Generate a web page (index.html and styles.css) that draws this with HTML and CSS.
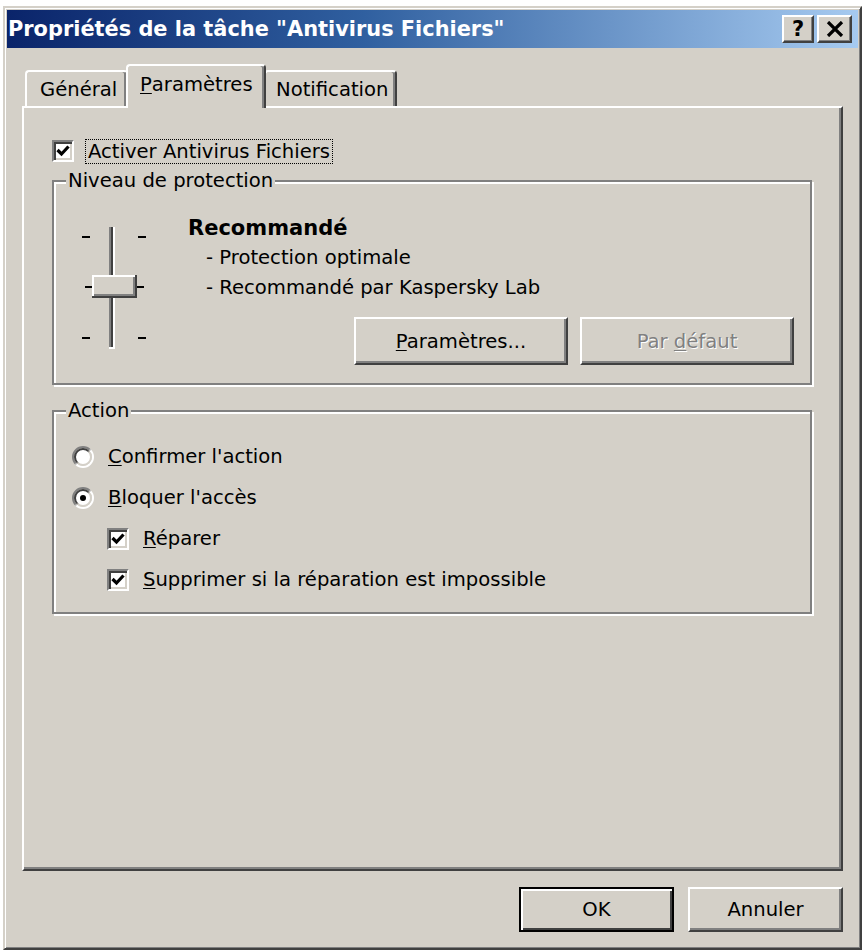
FILE: index.html
```html
<!DOCTYPE html>
<html lang="fr">
<head>
    <meta charset="UTF-8">
    <meta name="viewport" content="width=device-width, initial-scale=1.0">
    <title>Propriétés de la tâche "Antivirus Fichiers"</title>
    <link rel="stylesheet" href="styles.css">
</head>
<body>
    <div class="window">
        <div class="titlebar">
            <span class="title">Propriétés de la tâche "Antivirus Fichiers"</span>
            <div class="caption-buttons">
                <button class="caption-btn help">?</button>
                <button class="caption-btn close">
                    <svg width="18" height="16" viewBox="0 0 18 16">
                        <path d="M2 1 L16 15 M16 1 L2 15" stroke="#000" stroke-width="3.2" fill="none"/>
                    </svg>
                </button>
            </div>
        </div>

        <div class="tabs">
            <div class="tab general">Général</div>
            <div class="tab active"><u>P</u>aramètres</div>
            <div class="tab notify">Notification</div>
        </div>

        <div class="panel">
            <label class="option top-option">
                <span class="checkbox checked">
                    <svg width="18" height="18" viewBox="0 0 18 18"><path d="M3.5 8 L7.5 12 L14.5 4.5" stroke="#000" stroke-width="3.2" fill="none"/></svg>
                </span>
                <span class="focus">Activer Antivirus Fichiers</span>
            </label>

            <fieldset class="group level-group">
                <legend>Niveau de protection</legend>
                <div class="level-row">
                    <!-- trackbar with three stops, thumb on the middle one -->
                    <svg class="slider" width="72" height="130" viewBox="0 0 72 130">
                        <rect x="29" y="5" width="2" height="121" fill="#808080"/>
                        <rect x="31" y="5" width="2" height="121" fill="#404040"/>
                        <rect x="33" y="5" width="2" height="122" fill="#fff"/>
                        <rect x="29" y="125" width="6" height="2" fill="#fff"/>

                        <rect x="2" y="14" width="8" height="2" fill="#000"/>
                        <rect x="5" y="64" width="7" height="2" fill="#000"/>
                        <rect x="2" y="115" width="8" height="2" fill="#000"/>
                        <rect x="58" y="14" width="8" height="2" fill="#000"/>
                        <rect x="57" y="64" width="7" height="2" fill="#000"/>
                        <rect x="58" y="115" width="8" height="2" fill="#000"/>

                        <rect x="12" y="53" width="45" height="23" fill="#404040"/>
                        <rect x="12" y="53" width="43" height="21" fill="#fff"/>
                        <rect x="14" y="55" width="41" height="19" fill="#808080"/>
                        <rect x="14" y="55" width="39" height="17" fill="#d4d0c8"/>
                    </svg>
                    <div class="level-info">
                        <div class="level-name">Recommandé</div>
                        <div class="level-line">- Protection optimale</div>
                        <div class="level-line">- Recommandé par Kaspersky Lab</div>
                        <div class="level-actions">
                            <button class="btn wide"><u>P</u>aramètres...</button>
                            <button class="btn wide" disabled>Par <u>d</u>éfaut</button>
                        </div>
                    </div>
                </div>
            </fieldset>

            <fieldset class="group action-group">
                <legend>Action</legend>
                <label class="option">
                    <svg class="radio" width="22" height="22" viewBox="0 0 22 22">
                        <defs>
                            <linearGradient id="ringOut" x1="0" y1="0" x2="1" y2="1">
                                <stop offset="0.45" stop-color="#808080"/>
                                <stop offset="0.55" stop-color="#fff"/>
                            </linearGradient>
                            <linearGradient id="ringIn" x1="0" y1="0" x2="1" y2="1">
                                <stop offset="0.45" stop-color="#404040"/>
                                <stop offset="0.55" stop-color="#d4d0c8"/>
                            </linearGradient>
                        </defs>
                        <circle cx="11" cy="11" r="10" fill="none" stroke="url(#ringOut)" stroke-width="2"/>
                        <circle cx="11" cy="11" r="8" fill="#fff" stroke="url(#ringIn)" stroke-width="2"/>
                    </svg>
                    <span><u>C</u>onfirmer l'action</span>
                </label>
                <label class="option">
                    <svg class="radio" width="22" height="22" viewBox="0 0 22 22">
                        <circle cx="11" cy="11" r="10" fill="none" stroke="url(#ringOut)" stroke-width="2"/>
                        <circle cx="11" cy="11" r="8" fill="#fff" stroke="url(#ringIn)" stroke-width="2"/>
                        <circle cx="11" cy="11" r="3" fill="#000"/>
                    </svg>
                    <span><u>B</u>loquer l'accès</span>
                </label>
                <label class="option sub-option">
                    <span class="checkbox checked">
                        <svg width="18" height="18" viewBox="0 0 18 18"><path d="M3.5 8 L7.5 12 L14.5 4.5" stroke="#000" stroke-width="3.2" fill="none"/></svg>
                    </span>
                    <span><u>R</u>éparer</span>
                </label>
                <label class="option sub-option">
                    <span class="checkbox checked">
                        <svg width="18" height="18" viewBox="0 0 18 18"><path d="M3.5 8 L7.5 12 L14.5 4.5" stroke="#000" stroke-width="3.2" fill="none"/></svg>
                    </span>
                    <span><u>S</u>upprimer si la réparation est impossible</span>
                </label>
            </fieldset>
        </div>

        <div class="footer">
            <button class="btn dialog default">OK</button>
            <button class="btn dialog">Annuler</button>
        </div>
    </div>
</body>
</html>
```

FILE: styles.css
```css
body {
    margin: 0;
    background: #fff;
    font-family: "DejaVu Sans", sans-serif;
    font-size: 19.6px;
    color: #000;
}
.window {
    margin: 6px 0 0 3px;
    width: 859px;
    height: 944px;
    box-sizing: border-box;
    border: 2px solid;
    border-color: #d4d0c8 #404040 #404040 #d4d0c8;
    box-shadow: inset 1px 1px 0 #fff, inset -1px -1px 0 #808080;
    padding: 2px;
    background: #d4d0c8;
    display: flex;
    flex-direction: column;
}
.titlebar {
    height: 38px;
    flex-shrink: 0;
    display: flex;
    align-items: center;
    justify-content: space-between;
    padding: 0 6px 0 1px;
    background: linear-gradient(90deg, #0a246a 0%, #3060a0 42%, #a6caf0 100%);
}
.title {
    color: #fff;
    font-weight: bold;
    font-size: 20.9px;
    white-space: nowrap;
}
.caption-buttons {
    display: flex;
    gap: 3px;
}
.caption-btn {
    width: 32px;
    height: 28px;
    padding: 0;
    border: 2px solid;
    border-color: #fff #404040 #404040 #fff;
    box-shadow: inset -1px -1px 0 #808080;
    background: #d4d0c8;
    font-family: inherit;
    font-weight: bold;
    font-size: 21px;
    line-height: 1;
    display: flex;
    align-items: center;
    justify-content: center;
}
.caption-btn.close {
    width: 35px;
}

/* tab strip */
.tabs {
    display: flex;
    align-items: flex-end;
    margin-top: 16px;
    padding-left: 18px;
    height: 42px;
    flex-shrink: 0;
}
.tab {
    height: 36px;
    box-sizing: border-box;
    padding-left: 13px;
    display: flex;
    align-items: center;
    border: 2px solid;
    border-bottom: none;
    border-color: #fff #404040 transparent #fff;
    box-shadow: inset -2px 0 0 #808080;
    border-radius: 4px 4px 0 0;
    background: #d4d0c8;
    white-space: nowrap;
}
.tab.general {
    width: 103px;
}
.tab.notify {
    width: 133px;
    padding-left: 10px;
}
.tab.active {
    width: 140px;
    height: 44px;
    margin: 0 -2px -2px;
    padding: 0 0 6px 12px;
    position: relative;
    z-index: 1;
}
u {
    text-decoration: underline;
    text-underline-offset: 2px;
}

/* property page */
.panel {
    flex: 1;
    margin: 0 15px;
    border: 2px solid;
    border-color: #fff #404040 #404040 #fff;
    box-shadow: inset -2px -2px 0 #808080;
    padding: 30px 29px 0 28px;
}
.option {
    display: flex;
    align-items: center;
    gap: 14px;
    height: 41px;
}
.top-option {
    height: 26px;
}
.focus {
    border: 1px dotted #000;
    padding: 0 2px;
    margin-left: -3px;
    line-height: 23px;
}
.checkbox {
    width: 22px;
    height: 22px;
    box-sizing: border-box;
    flex-shrink: 0;
    border: 2px solid;
    border-color: #808080 #fff #fff #808080;
    box-shadow: inset 2px 2px 0 #404040, inset -2px -2px 0 #d4d0c8;
    background: #fff;
    display: flex;
}
.radio {
    flex-shrink: 0;
}

/* etched group boxes */
.group {
    margin: 5px 0 0;
    padding: 20px 16px 18px 12px;
    border: 2px solid #808080;
    box-shadow: inset 2px 2px 0 #fff, 2px 2px 0 #fff;
}
.group legend {
    padding: 0 2px;
    line-height: 24px;
    background: #d4d0c8;
}
.level-row {
    display: flex;
    align-items: flex-start;
    padding-left: 14px;
}
.slider {
    margin-top: 9px;
    flex-shrink: 0;
}
.level-info {
    flex: 1;
    margin-left: 36px;
    line-height: 30px;
}
.level-name {
    font-weight: bold;
    font-size: 21px;
}
.level-line {
    padding-left: 18px;
}
.level-actions {
    display: flex;
    justify-content: flex-end;
    gap: 12px;
    margin-top: 14px;
}
.action-group {
    margin-top: 14px;
    padding: 13px 16px 12px 12px;
}
.action-group .option {
    margin-left: 6px;
}
.action-group .sub-option {
    margin-left: 41px;
}

/* push buttons */
.btn {
    height: 48px;
    padding: 0;
    font-family: inherit;
    font-size: 19.6px;
    color: #000;
    background: #d4d0c8;
    border: 2px solid;
    border-color: #fff #404040 #404040 #fff;
    box-shadow: inset -2px -2px 0 #808080;
}
.btn.wide {
    width: 214px;
}
.btn:disabled {
    color: #808080;
    text-shadow: 1px 1px 0 #fff;
}
.footer {
    display: flex;
    justify-content: flex-end;
    gap: 14px;
    padding: 16px 15px 0 0;
    height: 59px;
    flex-shrink: 0;
}
.btn.dialog {
    width: 155px;
    height: 45px;
}
.btn.default {
    border-color: #000;
    box-shadow: inset 2px 2px 0 #fff, inset -2px -2px 0 #404040;
}
```
